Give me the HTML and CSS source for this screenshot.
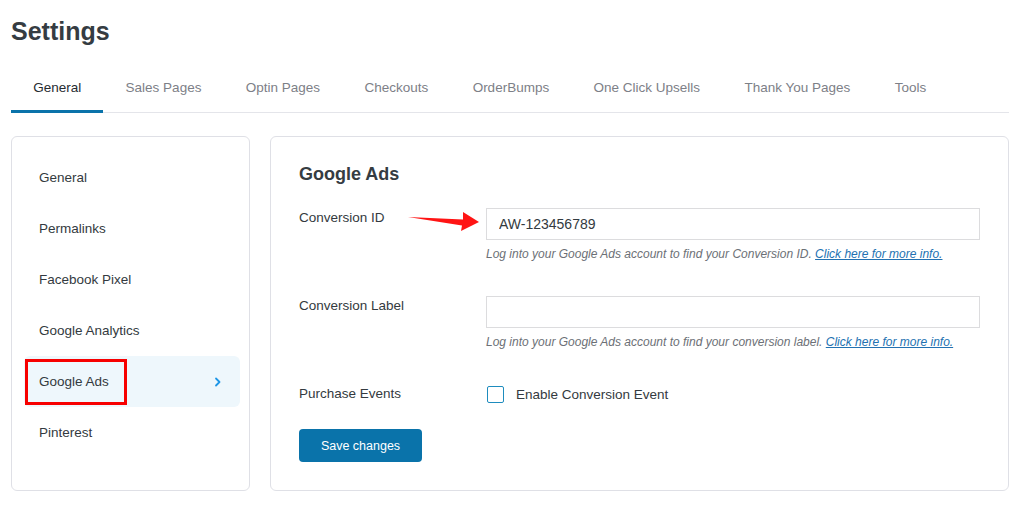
FILE: index.html
```html
<!DOCTYPE html>
<html lang="en">
<head>
    <meta charset="UTF-8">
    <meta name="viewport" content="width=device-width, initial-scale=1.0">
    <title>Settings</title>
    <link rel="stylesheet" href="styles.css">
</head>
<body>
    <div class="wrap">
        <h1 class="page-title">Settings</h1>

        <nav class="tabs">
            <a href="#" class="tab tab-active">General</a>
            <a href="#" class="tab">Sales Pages</a>
            <a href="#" class="tab">Optin Pages</a>
            <a href="#" class="tab">Checkouts</a>
            <a href="#" class="tab">OrderBumps</a>
            <a href="#" class="tab">One Click Upsells</a>
            <a href="#" class="tab">Thank You Pages</a>
            <a href="#" class="tab">Tools</a>
        </nav>

        <div class="settings-body">
            <ul class="side-menu">
                <li class="side-item">General</li>
                <li class="side-item">Permalinks</li>
                <li class="side-item">Facebook Pixel</li>
                <li class="side-item">Google Analytics</li>
                <li class="side-item side-active">
                    Google Ads
                    <svg class="chevron" width="8" height="10" viewBox="0 0 8 10">
                        <path d="M2 1.5 L5.5 5 L2 8.5" fill="none" stroke="#1e96e6" stroke-width="1.8" stroke-linecap="round" stroke-linejoin="round"/>
                    </svg>
                    <span class="mark-box"></span>
                </li>
                <li class="side-item">Pinterest</li>
            </ul>

            <div class="panel">
                <h2 class="panel-title">Google Ads</h2>

                <svg class="arrow" width="76" height="24" viewBox="0 0 76 24">
                    <path d="M2 7 L57 9.5 L57 2 L73 12 L55 21 L56 15.5 Z" fill="#ff1414"/>
                </svg>

                <div class="form-row">
                    <label class="field-label" for="convId">Conversion ID</label>
                    <div class="field">
                        <input id="convId" class="text-input" type="text" value="AW-123456789">
                        <p class="field-desc">Log into your Google Ads account to find your Conversion ID. <a href="#">Click here for more info.</a></p>
                    </div>
                </div>

                <div class="form-row">
                    <label class="field-label" for="convLabel">Conversion Label</label>
                    <div class="field">
                        <input id="convLabel" class="text-input" type="text">
                        <p class="field-desc">Log into your Google Ads account to find your conversion label. <a href="#">Click here for more info.</a></p>
                    </div>
                </div>

                <div class="form-row row-center">
                    <span class="field-label">Purchase Events</span>
                    <label class="check">
                        <span class="check-box"></span>
                        Enable Conversion Event
                    </label>
                </div>

                <button class="save-button">Save changes</button>
            </div>
        </div>
    </div>
</body>
</html>
```

FILE: styles.css
```css
body {
    margin: 0;
    padding: 0;
    background: #fff;
    font-family: "Liberation Sans", Arial, sans-serif;
    color: #333a40;
}

.wrap {
    padding: 12px 15px 0 11px;
}

.page-title {
    margin: 0;
    font-size: 25px;
    line-height: 38px;
    font-weight: bold;
    color: #353c42;
}

.tabs {
    display: flex;
    margin-top: 14px;
    border-bottom: 1px solid #e4e5ea;
}

.tab {
    padding: 15px 22.2px 13px;
    font-size: 13.5px;
    line-height: 18px;
    color: #7d8087;
    text-decoration: none;
    border-bottom: 3px solid transparent;
    margin-bottom: -1px;
}

.tab-active {
    color: #262c31;
    border-bottom-color: #0a73aa;
}

.settings-body {
    display: flex;
    gap: 20px;
    margin-top: 23px;
}

/* left menu */
.side-menu {
    list-style: none;
    margin: 0;
    padding: 15px 9px 32px 12px;
    width: 216px;
    border: 1px solid #dfe0e6;
    border-radius: 6px;
}

.side-item {
    position: relative;
    display: flex;
    align-items: center;
    justify-content: space-between;
    height: 51px;
    padding: 0 18px 0 15px;
    font-size: 13.5px;
    color: #333a40;
    border-radius: 6px;
}

.side-active {
    background-color: #eef7fc;
}

.mark-box {
    position: absolute;
    left: 1px;
    top: 3px;
    width: 96px;
    height: 40px;
    border: 3px solid #f70000;
}

/* main panel */
.panel {
    position: relative;
    flex: 1;
    padding: 25px 28px 28px 28px;
    border: 1px solid #dfe0e6;
    border-radius: 6px;
}

.panel-title {
    margin: 0 0 22px;
    font-size: 18px;
    line-height: 24px;
    font-weight: bold;
    color: #353c42;
}

.arrow {
    position: absolute;
    left: 135px;
    top: 73px;
}

.form-row {
    display: flex;
    align-items: flex-start;
    margin-bottom: 33px;
}

.row-center {
    align-items: center;
    margin-bottom: 25px;
}

.field-label {
    width: 187px;
    flex-shrink: 0;
    font-size: 13.5px;
    line-height: 20px;
    color: #333a40;
}

.field {
    flex: 1;
}

.text-input {
    display: block;
    width: 100%;
    height: 32px;
    box-sizing: border-box;
    padding: 0 12px;
    border: 1px solid #dcdcde;
    border-radius: 0;
    font-family: "Liberation Sans", Arial, sans-serif;
    font-size: 14px;
    color: #333a40;
}

.field-desc {
    margin: 5px 0 0;
    font-size: 12px;
    line-height: 18px;
    font-style: italic;
    color: #6c7076;
}

.field-desc a {
    color: #2271b1;
}

.check {
    display: flex;
    align-items: center;
    gap: 12px;
    font-size: 13.5px;
    color: #333a40;
}

.check-box {
    width: 15px;
    height: 15px;
    margin-left: 1px;
    border: 1.5px solid #1e8cbe;
    border-radius: 2px;
}

.save-button {
    display: block;
    width: 123px;
    height: 33px;
    border: none;
    border-radius: 4px;
    background-color: #0a73aa;
    color: #fff;
    font-family: "Liberation Sans", Arial, sans-serif;
    font-size: 12.5px;
    cursor: pointer;
}
```
